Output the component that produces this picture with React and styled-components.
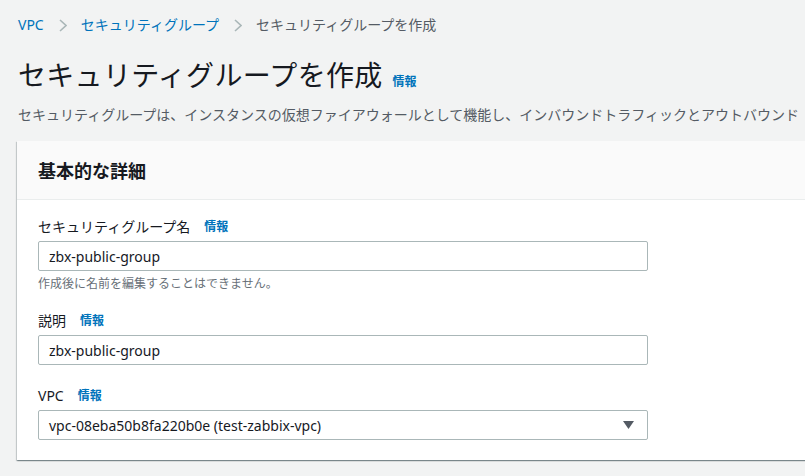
import React from "react";
import styled, { createGlobalStyle } from "styled-components";

const GlobalStyle = createGlobalStyle`
  html, body {
    margin: 0;
    padding: 0;
    background: #f2f3f3;
    overflow: hidden;
  }
  body {
    font-family: "Noto Sans", "Noto Sans CJK JP", sans-serif;
    color: #16191f;
  }
`;

const Page = styled.main`
  width: 805px;
  height: 476px;
  padding: 15px 0 0 18px;
  box-sizing: border-box;
  overflow: hidden;
`;

const Breadcrumbs = styled.nav`
  display: flex;
  align-items: center;
  height: 20px;
  font-size: 14px;
  line-height: 20px;
  white-space: nowrap;
`;

const Crumb = styled.span`
  color: ${(p) => (p.$current ? "#545b64" : "#0073bb")};
`;

const Chevron = styled.span`
  display: flex;
  align-items: center;
  margin: 0 14px 0 15px;
  color: #aab7b8;
`;

const TitleRow = styled.div`
  display: flex;
  align-items: baseline;
  margin-top: 22px;
  height: 36px;
  white-space: nowrap;
`;

const Title = styled.h1`
  margin: 0;
  font-size: 28px;
  font-weight: 400;
  line-height: 36px;
  letter-spacing: 0.3px;
  color: #16191f;
`;

const Info = styled.span`
  color: #0073bb;
  font-size: 12px;
  font-weight: 700;
  margin-left: ${(p) => p.$gap || 14}px;
`;

const Description = styled.p`
  margin: 12px 0 0;
  font-size: 14px;
  line-height: 20px;
  color: #545b64;
  white-space: nowrap;
`;

const Card = styled.section`
  margin: 16px 0 0 -1px;
  width: 1000px;
  background: #ffffff;
  box-shadow: 0 1px 1px 0 rgba(0, 28, 36, 0.3), 1px 1px 1px 0 rgba(0, 28, 36, 0.15),
    -1px 1px 1px 0 rgba(0, 28, 36, 0.15);
`;

const CardHeader = styled.header`
  display: flex;
  align-items: center;
  height: 58px;
  padding-left: 21px;
  background: #fafafa;
  border-bottom: 1px solid #eaeded;
`;

const CardTitle = styled.h2`
  margin: 0;
  font-size: 18px;
  font-weight: 700;
  color: #16191f;
`;

const CardBody = styled.div`
  display: flex;
  flex-direction: column;
  padding: 17px 0 20px 21px;
`;

const Field = styled.div`
  display: flex;
  flex-direction: column;
  margin-top: ${(p) => p.$top || 0}px;
`;

const Label = styled.label`
  display: flex;
  align-items: center;
  height: 20px;
  font-size: 14px;
  line-height: 20px;
  color: #16191f;
`;

const Input = styled.div`
  display: flex;
  align-items: center;
  justify-content: space-between;
  width: 610px;
  height: 30px;
  margin-top: 4px;
  padding: 0 13px 0 10px;
  box-sizing: border-box;
  border: 1px solid #aab7b8;
  border-radius: 2px;
  background: #ffffff;
  font-size: 14px;
  color: #16191f;
`;

const Hint = styled.div`
  margin-top: 5px;
  font-size: 12px;
  line-height: 16px;
  color: #687078;
`;

const Caret = () => (
  <svg width="11" height="8" viewBox="0 0 11 8">
    <polygon points="0,0 11,0 5.5,8" fill="#545b64" />
  </svg>
);

const ChevronIcon = () => (
  <svg width="8" height="13" viewBox="0 0 8 13">
    <polyline points="1,1 7,6.5 1,12" fill="none" stroke="#aab7b8" strokeWidth="1.6" />
  </svg>
);

export default function App() {
  return (
    <>
      <GlobalStyle />
      <Page>
        <Breadcrumbs>
          <Crumb>VPC</Crumb>
          <Chevron>
            <ChevronIcon />
          </Chevron>
          <Crumb>セキュリティグループ</Crumb>
          <Chevron>
            <ChevronIcon />
          </Chevron>
          <Crumb $current>セキュリティグループを作成</Crumb>
        </Breadcrumbs>
        <TitleRow>
          <Title>セキュリティグループを作成</Title>
          <Info $gap={10}>情報</Info>
        </TitleRow>
        <Description>
          セキュリティグループは、インスタンスの仮想ファイアウォールとして機能し、インバウンドトラフィックとアウトバウンド
        </Description>
        <Card>
          <CardHeader>
            <CardTitle>基本的な詳細</CardTitle>
          </CardHeader>
          <CardBody>
            <Field>
              <Label>
                セキュリティグループ名<Info>情報</Info>
              </Label>
              <Input>zbx-public-group</Input>
              <Hint>作成後に名前を編集することはできません。</Hint>
            </Field>
            <Field $top={19}>
              <Label>
                説明<Info>情報</Info>
              </Label>
              <Input>zbx-public-group</Input>
            </Field>
            <Field $top={21}>
              <Label>
                VPC<Info>情報</Info>
              </Label>
              <Input>
                <span>vpc-08eba50b8fa220b0e (test-zabbix-vpc)</span>
                <Caret />
              </Input>
            </Field>
          </CardBody>
        </Card>
      </Page>
    </>
  );
}
